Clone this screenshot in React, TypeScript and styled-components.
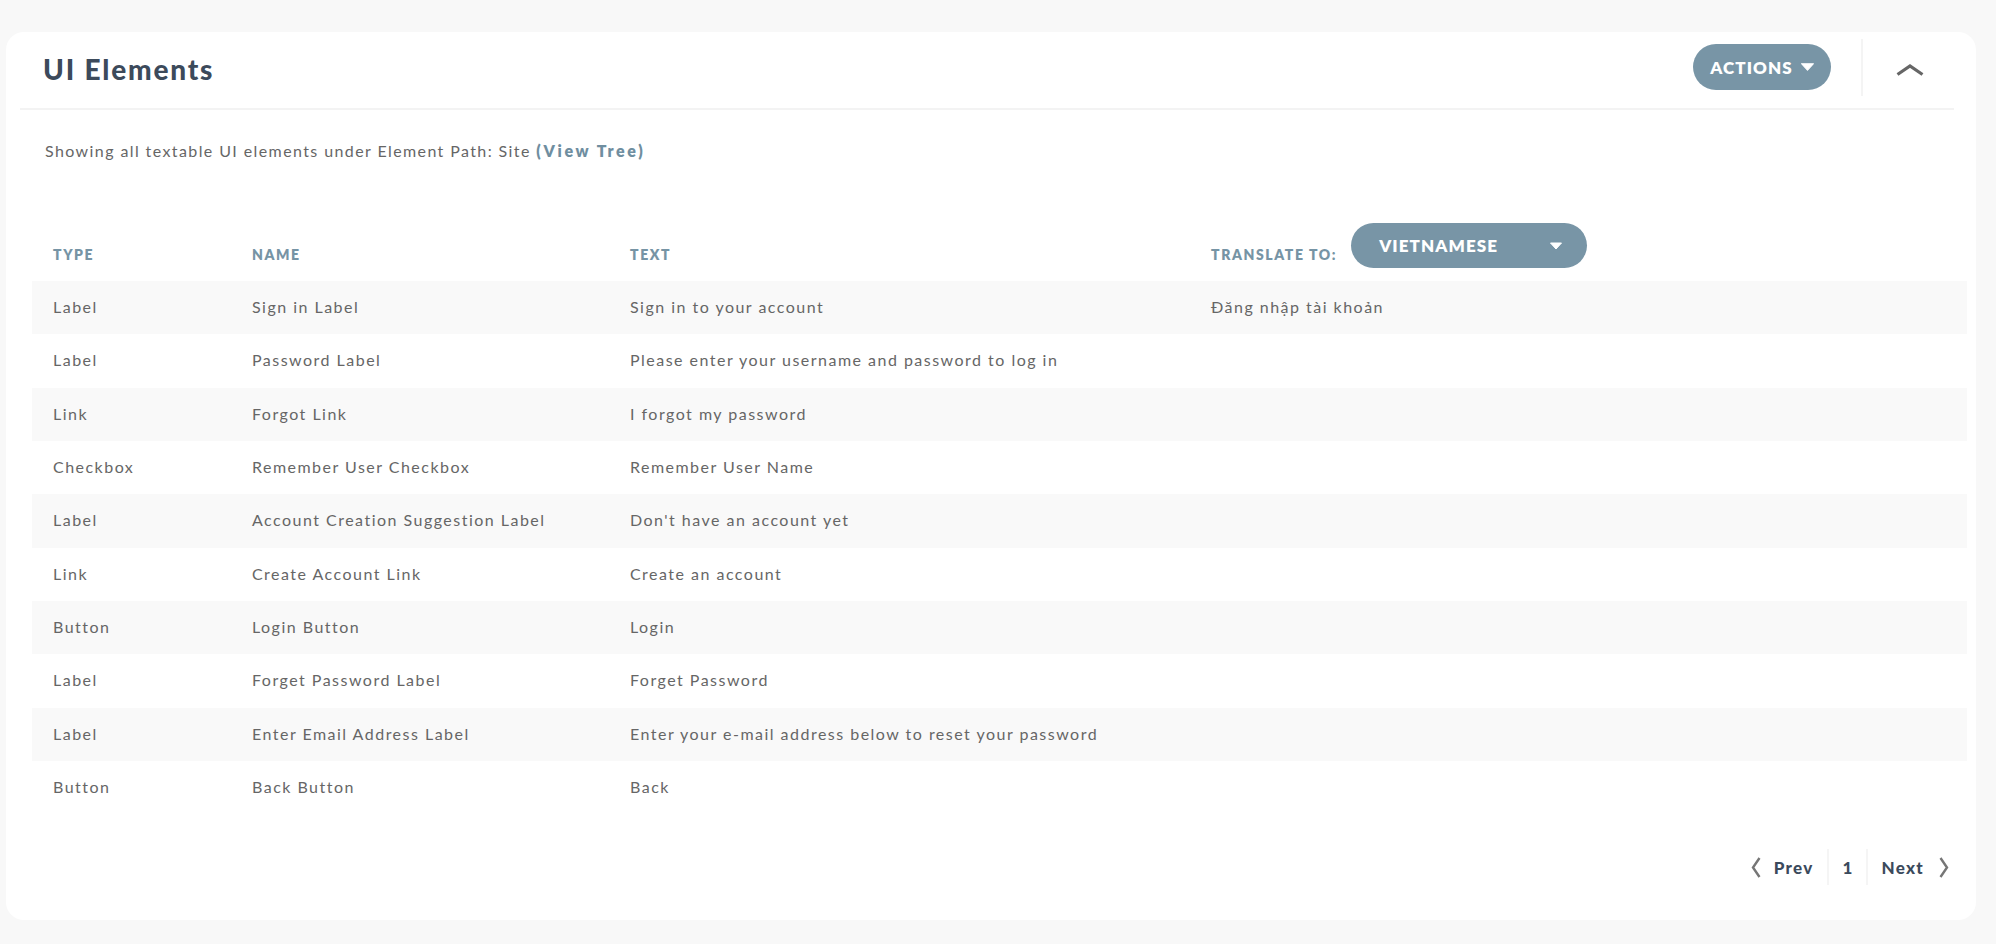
import React from "react";
import styled, { createGlobalStyle } from "styled-components";

const GlobalStyle = createGlobalStyle`
  html, body {
    margin: 0;
    padding: 0;
    background: #f8f8f8;
  }
  body {
    font-family: "Lato", "Noto Sans", sans-serif;
    color: #666666;
  }
  * { box-sizing: border-box; }
`;

const Page = styled.div`
  padding: 32px 20px 24px 6px;
  min-height: 944px;
`;

const Card = styled.section`
  background: #ffffff;
  border-radius: 18px;
  height: 888px;
  display: flex;
  flex-direction: column;
`;

const Header = styled.header`
  margin: 0 22px 0 14px;
  height: 78px;
  padding: 0 30px 6px 23px;
  border-bottom: 2px solid #f3f3f3;
  display: flex;
  align-items: center;
`;

const Title = styled.h1`
  margin: 6px 0 0 0;
  flex: 1;
  font-size: 28px;
  font-weight: 900;
  letter-spacing: 1.8px;
  color: #3c4a5b;
  line-height: 1.2;
`;

const PillButton = styled.button<{ $width: number; $pad: string; $justify?: string }>`
  width: ${(p) => p.$width}px;
  height: ${(p) => (p.$width > 200 ? 45 : 46)}px;
  border: none;
  border-radius: 23px;
  background: #7895a6;
  color: #ffffff;
  font-family: "Lato", sans-serif;
  font-weight: 800;
  font-size: 17px;
  letter-spacing: 1.1px;
  display: flex;
  align-items: center;
  justify-content: ${(p) => p.$justify || "center"};
  gap: 8px;
  padding: ${(p) => p.$pad};
  cursor: pointer;
  white-space: nowrap;

  svg { flex-shrink: 0; }
`;

const VDivider = styled.div`
  width: 2px;
  height: 57px;
  background: #f4f4f4;
  margin: 0 33px 0 30px;
`;

const CollapseButton = styled.button`
  border: none;
  background: transparent;
  padding: 0;
  margin-top: 6px;
  display: flex;
  align-items: center;
  cursor: pointer;
`;

const Description = styled.p`
  margin: 0;
  padding: 31px 0 0 39px;
  font-size: 16px;
  line-height: 19px;
  letter-spacing: 1.4px;
  color: #666666;
`;

const ViewTree = styled.a`
  color: #6f8ea0;
  font-weight: 800;
  letter-spacing: 2.6px;
  text-decoration: none;
  cursor: pointer;
`;

const Table = styled.div`
  margin: 63px 9px 0 26px;
  display: flex;
  flex-direction: column;
`;

const HeadRow = styled.div`
  display: grid;
  grid-template-columns: 199px 378px 581px 1fr;
  padding-left: 21px;
  height: 58px;
  align-items: center;
`;

const HeadLabel = styled.span`
  padding-top: 5px;
  font-size: 14px;
  font-weight: 800;
  letter-spacing: 1.6px;
  color: #7694a5;
  line-height: 18px;
  white-space: nowrap;
`;

const TranslateCell = styled.div`
  display: flex;
  align-items: center;
  gap: 14px;
  height: 58px;
`;

const DropdownWrap = styled.div`
  align-self: flex-start;
`;

const Row = styled.div<{ $striped: boolean }>`
  display: grid;
  grid-template-columns: 199px 378px 581px 1fr;
  padding-left: 21px;
  height: 53.33px;
  align-items: center;
  background: ${(p) => (p.$striped ? "#f9f9f9" : "#ffffff")};
`;

const Cell = styled.span`
  font-size: 16px;
  letter-spacing: 1.48px;
  color: #666666;
  line-height: 19px;
  white-space: nowrap;
  margin-top: -2px;
`;

const Pagination = styled.nav`
  margin: 35px 27px 0 0;
  height: 36px;
  display: flex;
  justify-content: flex-end;
  align-items: center;
`;

const PageLink = styled.a<{ $side: "prev" | "next" }>`
  display: flex;
  align-items: center;
  gap: ${(p) => (p.$side === "prev" ? 13 : 15)}px;
  padding: ${(p) => (p.$side === "prev" ? "0 13px 0 0" : "0 0 0 13px")};
  font-size: 17px;
  font-weight: 900;
  letter-spacing: 1.3px;
  color: #3b4a5c;
  cursor: pointer;
`;

const PageNumber = styled.span`
  padding: 0 14px;
  font-size: 17px;
  font-weight: 900;
  color: #3b4a5c;
`;

const PageDivider = styled.span`
  width: 2px;
  height: 36px;
  background: #f5f5f5;
`;

const Caret = ({ w, h }: { w: number; h: number }) => (
  <svg width={w} height={h} viewBox="0 0 12 7" aria-hidden>
    <path d="M0.5 0.5 L11.5 0.5 L6 6.5 Z" fill="#ffffff" stroke="#ffffff" strokeLinejoin="round" />
  </svg>
);

const ChevronUp = () => (
  <svg width="28" height="12" viewBox="0 0 28 12" aria-hidden>
    <path d="M1.5 10.5 L14 2 L26.5 10.5" fill="none" stroke="#666666" strokeWidth="3.2" />
  </svg>
);

const ChevronSide = ({ dir }: { dir: "left" | "right" }) => (
  <svg width="10" height="21" viewBox="0 0 10 21" aria-hidden>
    <path
      d={dir === "left" ? "M8.5 1 L2 10.5 L8.5 20" : "M1.5 1 L8 10.5 L1.5 20"}
      fill="none"
      stroke="#767676"
      strokeWidth="2.4"
    />
  </svg>
);

type Item = { type: string; name: string; text: string; translation?: string };

const items: Item[] = [
  { type: "Label", name: "Sign in Label", text: "Sign in to your account", translation: "Đăng nhập tài khoản" },
  { type: "Label", name: "Password Label", text: "Please enter your username and password to log in" },
  { type: "Link", name: "Forgot Link", text: "I forgot my password" },
  { type: "Checkbox", name: "Remember User Checkbox", text: "Remember User Name" },
  { type: "Label", name: "Account Creation Suggestion Label", text: "Don't have an account yet" },
  { type: "Link", name: "Create Account Link", text: "Create an account" },
  { type: "Button", name: "Login Button", text: "Login" },
  { type: "Label", name: "Forget Password Label", text: "Forget Password" },
  { type: "Label", name: "Enter Email Address Label", text: "Enter your e-mail address below to reset your password" },
  { type: "Button", name: "Back Button", text: "Back" },
];

export default function App() {
  return (
    <>
      <GlobalStyle />
      <Page>
        <Card>
          <Header>
            <Title>UI Elements</Title>
            <PillButton $width={138} $pad="0">
              ACTIONS
              <Caret w={13} h={8} />
            </PillButton>
            <VDivider />
            <CollapseButton aria-label="Collapse">
              <ChevronUp />
            </CollapseButton>
          </Header>
          <Description>
            Showing all textable UI elements under Element Path: Site <ViewTree>(View Tree)</ViewTree>
          </Description>
          <Table>
            <HeadRow>
              <HeadLabel>TYPE</HeadLabel>
              <HeadLabel>NAME</HeadLabel>
              <HeadLabel>TEXT</HeadLabel>
              <TranslateCell>
                <HeadLabel>TRANSLATE TO:</HeadLabel>
                <DropdownWrap>
                  <PillButton $width={236} $pad="0 25px 0 28px" $justify="space-between">
                    VIETNAMESE
                    <Caret w={12} h={8} />
                  </PillButton>
                </DropdownWrap>
              </TranslateCell>
            </HeadRow>
            {items.map((it, i) => (
              <Row key={it.name} $striped={i % 2 === 0}>
                <Cell>{it.type}</Cell>
                <Cell>{it.name}</Cell>
                <Cell>{it.text}</Cell>
                <Cell>{it.translation ?? ""}</Cell>
              </Row>
            ))}
          </Table>
          <Pagination>
            <PageLink $side="prev">
              <ChevronSide dir="left" />
              Prev
            </PageLink>
            <PageDivider />
            <PageNumber>1</PageNumber>
            <PageDivider />
            <PageLink $side="next">
              Next
              <ChevronSide dir="right" />
            </PageLink>
          </Pagination>
        </Card>
      </Page>
    </>
  );
}
